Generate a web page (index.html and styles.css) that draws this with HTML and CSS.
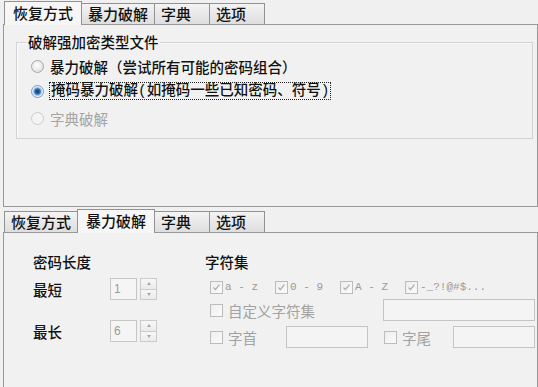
FILE: index.html
```html
<!DOCTYPE html>
<html lang="zh-CN">
<head>
<meta charset="utf-8">
<title>恢复方式</title>
<link rel="stylesheet" href="styles.css">
</head>
<body>
<div class="tabwidget">
  <div class="tabbar">
    <div class="tab active">恢复方式</div>
    <div class="tab">暴力破解</div>
    <div class="tab">字典</div>
    <div class="tab">选项</div>
  </div>
  <div class="pane pane-top">
    <fieldset class="group">
      <legend>破解强加密类型文件</legend>
      <label class="radio-row"><span class="radio"></span><span>暴力破解（尝试所有可能的密码组合）</span></label>
      <label class="radio-row"><span class="radio checked"></span><span class="focus">掩码暴力破解(如掩码一些已知密码、符号)</span></label>
      <label class="radio-row disabled"><span class="radio"></span><span>字典破解</span></label>
    </fieldset>
  </div>
</div>

<div class="tabwidget second">
  <div class="tabbar">
    <div class="tab">恢复方式</div>
    <div class="tab active">暴力破解</div>
    <div class="tab">字典</div>
    <div class="tab">选项</div>
  </div>
  <div class="pane pane-bottom">
    <div class="col-len">
      <div class="hdr">密码长度</div>
      <div class="len-row">
        <span class="len-label">最短</span>
        <div class="spin">
          <div class="spin-input">1</div>
          <div class="spin-btns"><span class="up"><i></i></span><span class="down"><i></i></span></div>
        </div>
      </div>
      <div class="len-row second-row">
        <span class="len-label">最长</span>
        <div class="spin">
          <div class="spin-input">6</div>
          <div class="spin-btns"><span class="up"><i></i></span><span class="down"><i></i></span></div>
        </div>
      </div>
    </div>
    <div class="col-charset">
      <div class="hdr">字符集</div>
      <div class="cb-row">
        <span class="cb-item"><span class="cb checked"><svg viewBox="0 0 13 13" width="11" height="11"><path d="M3 6.5 L5.2 9 L10 3" fill="none" stroke="#a9a9a9" stroke-width="1.4"/></svg></span><span class="mono">a - z</span></span>
        <span class="cb-item"><span class="cb checked"><svg viewBox="0 0 13 13" width="11" height="11"><path d="M3 6.5 L5.2 9 L10 3" fill="none" stroke="#a9a9a9" stroke-width="1.4"/></svg></span><span class="mono">0 - 9</span></span>
        <span class="cb-item"><span class="cb checked"><svg viewBox="0 0 13 13" width="11" height="11"><path d="M3 6.5 L5.2 9 L10 3" fill="none" stroke="#a9a9a9" stroke-width="1.4"/></svg></span><span class="mono">A - Z</span></span>
        <span class="cb-item"><span class="cb checked"><svg viewBox="0 0 13 13" width="11" height="11"><path d="M3 6.5 L5.2 9 L10 3" fill="none" stroke="#a9a9a9" stroke-width="1.4"/></svg></span><span class="mono">-_?!@#$...</span></span>
      </div>
      <div class="opt-grid">
        <span class="cb-item"><span class="cb"></span><span class="dis">自定义字符集</span></span>
        <div class="field wide"></div>
        <span class="cb-item affix"><span class="cb"></span><span class="dis">字首</span><span class="field short"></span></span>
        <span class="cb-item affix"><span class="cb"></span><span class="dis">字尾</span><span class="field short"></span></span>
      </div>
    </div>
  </div>
</div>
</body>
</html>
```

FILE: styles.css
```css
html, body {
  margin: 0;
  padding: 0;
}
body {
  width: 538px;
  height: 387px;
  overflow: hidden;
  background: #f0f0f0;
  font-family: "Noto Sans CJK SC", "Noto Sans", sans-serif;
  font-size: 14.5px;
  font-weight: 500;
  color: #111;
}

/* ---------- tabs ---------- */
.tabwidget {
  margin-left: 3px;
}
.tabwidget.second {
  margin-top: 1px;
}
.tabbar {
  display: flex;
  align-items: flex-end;
  height: 24px;
  padding-left: 1px;
}
.tab {
  box-sizing: border-box;
  height: 21px;
  min-width: 56px;
  padding: 0 6px;
  border: 1px solid #929292;
  border-bottom: none;
  margin-right: -1px;
  background: linear-gradient(#f4f4f4, #e8e8e8 50%, #dedede);
  font-size: 15px;
  line-height: 19px;
  white-space: nowrap;
}
.tab.active {
  position: relative;
  z-index: 1;
  height: 24px;
  margin-bottom: -1px;
  padding: 0 8px;
  background: #f6f6f6;
  line-height: 21px;
}

.pane {
  box-sizing: border-box;
  border: 1px solid #989898;
  background: #f1f1f1;
}
.pane-top {
  height: 183px;
  padding: 8px 4px 0 12px;
}
.pane-bottom {
  height: 170px;
  display: flex;
  padding: 19px 0 0 29px;
}

/* ---------- group box ---------- */
.group {
  margin: 0;
  padding: 4px 0 9px 10px;
  border: 1px solid #d2d2d2;
  box-shadow: inset 1px 1px 0 #fbfbfb;
  display: flex;
  flex-direction: column;
  gap: 3px;
}
.group legend {
  padding: 0 1px;
  line-height: 18px;
}
.radio-row {
  display: flex;
  align-items: center;
  gap: 6px;
  height: 22px;
  padding-left: 4px;
}
.radio-row + .radio-row + .radio-row {
  margin-top: 2px;
}
.radio {
  flex: none;
  box-sizing: border-box;
  width: 13px;
  height: 13px;
  border-radius: 50%;
  border: 1px solid #a6a6a6;
  background: radial-gradient(circle at 45% 40%, #ffffff, #e2e2e2 70%);
}
.radio.checked {
  border-color: #7d9cc0;
  background: radial-gradient(circle, #1d4c86 0 1.5px, #3a7cc4 2.8px, #8fb9e6 3.8px, #e4edf7 4.8px, #f4f4f4 6px);
}
.radio-row.disabled {
  color: #a4a4a4;
  font-weight: 400;
}
.radio-row.disabled .radio {
  border-color: #cbcbcb;
  background: #f4f4f4;
}
.focus {
  border: 1px dotted #222;
  padding: 0 1px;
  line-height: 16px;
  margin-left: -1px;
  font-family: "Liberation Mono", "Noto Sans CJK SC", monospace;
}

/* ---------- bottom pane ---------- */
.hdr {
  line-height: 20px;
  height: 20px;
}
.col-len {
  width: 172px;
  flex: none;
}
.len-row {
  display: flex;
  align-items: center;
  height: 22px;
  margin-top: 6px;
}
.len-row.second-row {
  margin-top: 20px;
}
.len-label {
  width: 77px;
}
.spin {
  display: flex;
  gap: 3px;
}
.spin-input {
  box-sizing: border-box;
  width: 27px;
  height: 22px;
  border: 1px solid #c6c6c6;
  background: #f5f5f5;
  color: #9c9c9c;
  font-family: "Liberation Sans", sans-serif;
  font-weight: 400;
  font-size: 12px;
  line-height: 20px;
  padding-left: 3px;
}
.spin-btns {
  display: flex;
  flex-direction: column;
  width: 17px;
  height: 22px;
}
.spin-btns span {
  flex: 1;
  box-sizing: border-box;
  border: 1px solid #cbcbcb;
  background: linear-gradient(#f7f7f7, #ebebeb);
  display: flex;
  align-items: center;
  justify-content: center;
}
.spin-btns span + span {
  border-top: none;
}
.spin-btns i {
  width: 0;
  height: 0;
  border-left: 2.5px solid transparent;
  border-right: 2.5px solid transparent;
}
.spin-btns .up i {
  border-bottom: 3px solid #a8a8a8;
}
.spin-btns .down i {
  border-top: 3px solid #a8a8a8;
}

.col-charset {
  flex: 1;
}
.cb-row {
  display: flex;
  align-items: center;
  gap: 17px;
  height: 20px;
  margin-top: 5px;
  padding-left: 5px;
}
.cb-item {
  display: flex;
  align-items: center;
  gap: 2px;
}
.cb {
  flex: none;
  box-sizing: border-box;
  width: 13px;
  height: 13px;
  border: 1px solid #bcbcbc;
  background: linear-gradient(135deg, #eeeeee, #fbfbfb);
  display: flex;
  align-items: center;
  justify-content: center;
}
.mono {
  font-family: "Liberation Mono", monospace;
  font-weight: 400;
  font-size: 11px;
  color: #9a9a9a;
}
.dis {
  color: #a2a2a2;
  font-weight: 400;
  margin-left: 3px;
}
.opt-grid {
  display: grid;
  grid-template-columns: 173px 152px;
  grid-auto-rows: 22px;
  row-gap: 5px;
  margin-top: 2px;
  padding-left: 5px;
}
.field {
  box-sizing: border-box;
  height: 22px;
  border: 1px solid #c4c4c4;
  background: #f4f4f4;
}
.field.wide {
  width: 152px;
}
.field.short {
  width: 82px;
  margin-left: auto;
}
.cb-item.affix .field {
  margin-right: 15px;
}
.cb-item.affix + .cb-item.affix {
  padding-left: 1px;
}
.cb-item.affix + .cb-item.affix .field {
  margin-right: 0;
}
```
